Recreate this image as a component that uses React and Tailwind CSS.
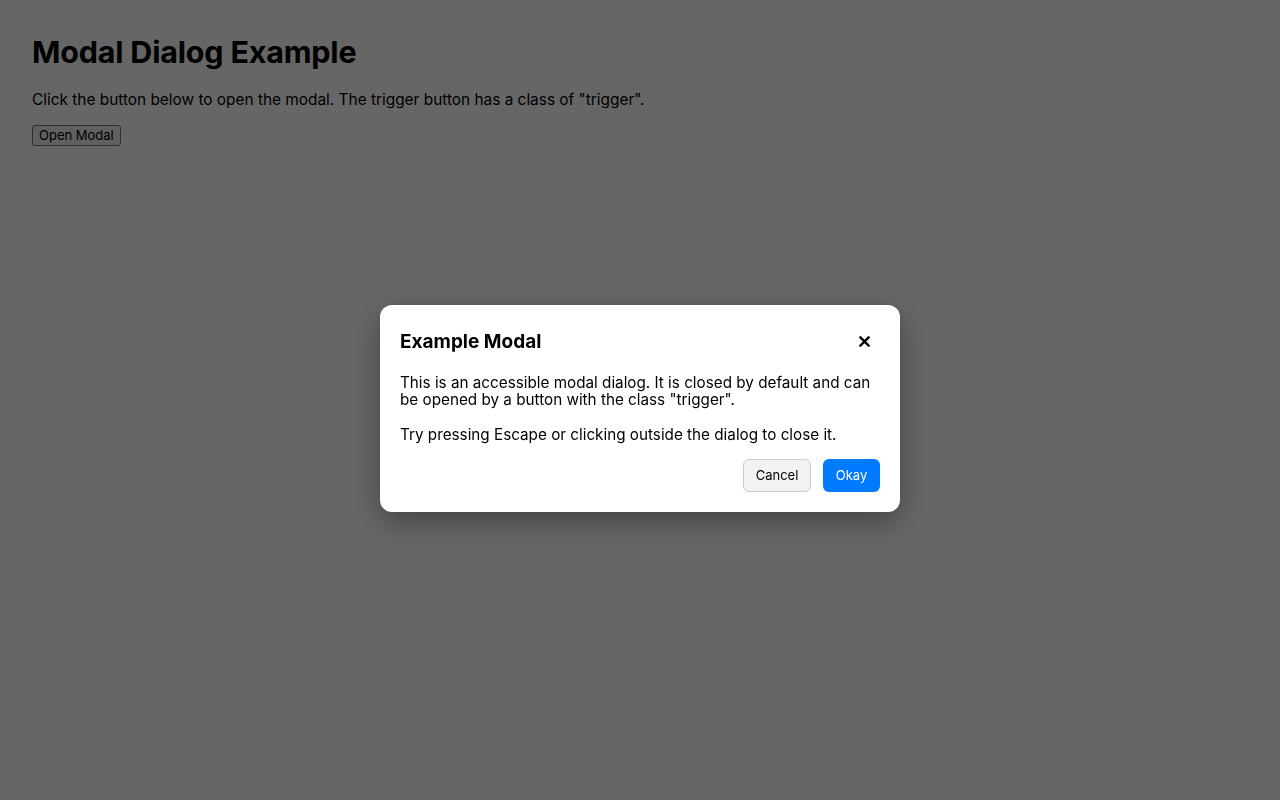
import React from "react";

export default function App() {
	return (
		<div className="min-h-screen bg-white p-8 text-black" style={{ fontFamily: "Inter, 'Noto Sans', sans-serif" }}>
			{/* Page content */}
			<h1 className="text-[30.5px] font-bold leading-[38px] tracking-[-0.2px] mt-px mb-[17px]">Modal Dialog Example</h1>
			<p className="text-[15.4px] leading-6 mb-[10px]">
				Click the button below to open the modal. The trigger button has a class of "trigger".
			</p>
			<button className="trigger text-[13px] leading-[15px] px-[6px] py-[2px] border border-[#767676] rounded-[3px] bg-[#efefef]">
				Open Modal
			</button>

			{/* Overlay */}
			<div className="fixed inset-0 bg-black/60 flex items-center justify-center pt-[17px]">
				<div className="w-[520px] bg-white rounded-xl p-5 shadow-[0_10px_30px_rgba(0,0,0,0.35)]">
					<div className="flex items-center justify-between mt-[6px] mb-[19px]">
						<h2 className="text-[19px] font-bold leading-[20px] relative -top-px">Example Modal</h2>
						<button className="w-6 h-6 flex items-center justify-center mr-[4px] relative -top-[2px]" aria-label="Close">
							<svg width="11" height="11" viewBox="0 0 12 12" fill="none" stroke="black" strokeWidth="2.6" strokeLinecap="round">
								<path d="M1.5 1.5 L10.5 10.5 M10.5 1.5 L1.5 10.5" />
							</svg>
						</button>
					</div>
					<p className="text-[15.25px] leading-[17px] mb-[18px]">
						This is an accessible modal dialog. It is closed by default and can be opened by a button with the class "trigger".
					</p>
					<p className="text-[15.25px] leading-[17px] mb-4">
						Try pressing Escape or clicking outside the dialog to close it.
					</p>
					<div className="flex justify-end gap-3">
						<button className="h-[33px] w-[68px] text-[13px] rounded-md border border-[#cccccc] bg-[#f2f2f2]">Cancel</button>
						<button className="h-[33px] w-[57px] text-[13px] rounded-md bg-[#007bff] text-white">Okay</button>
					</div>
				</div>
			</div>
		</div>
	);
}
